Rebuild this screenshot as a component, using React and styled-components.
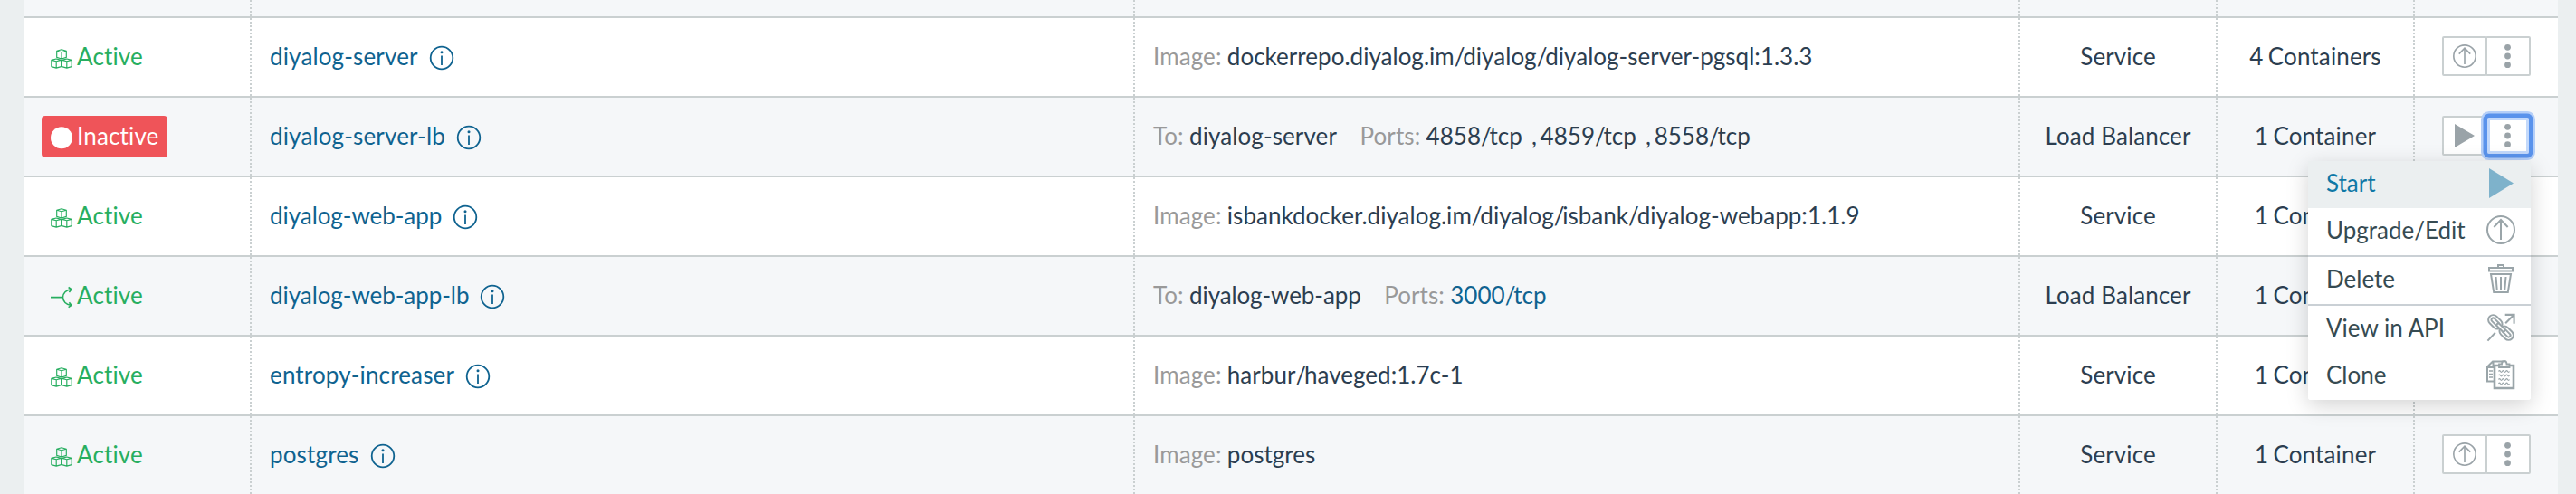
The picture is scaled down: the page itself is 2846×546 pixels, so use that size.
import React from 'react';
import styled, { createGlobalStyle, css } from 'styled-components';

const GlobalStyle = createGlobalStyle`
  * { box-sizing: border-box; }
  body {
    margin: 0;
    background: #ebeff0;
    color: #2c3e50;
    font-family: Lato, "Liberation Sans", sans-serif;
    font-size: 26px;
    line-height: 40px;
    font-variant-ligatures: none;
    letter-spacing: 0.02px;
    overflow: hidden;
  }
`;

const Page = styled.main`
  height: 546px;
  padding: 0 20px 0 26px;
  overflow: hidden;
`;

const Row = styled.div`
  display: grid;
  grid-template-columns: 250px 976px 978px 218px 218px 160px;
  height: ${(p) => (p.$partial ? 18 : 88)}px;
  background: ${(p) => (p.$shaded ? '#f5f7f9' : '#fff')};
  border-top: ${(p) => (p.$partial ? 0 : 2)}px solid #cad0d1;
`;

const Cell = styled.div`
  display: flex;
  align-items: center;
  justify-content: ${(p) => (p.$center ? 'center' : 'flex-start')};
  padding: 0 20px 2px;
  border-left: ${(p) => (p.$first ? 0 : 2)}px dotted #cad0d1;
  white-space: nowrap;
`;

const StatusCell = styled(Cell)`
  padding-bottom: 0;
  letter-spacing: 0.15px;
`;

const KindCell = styled(Cell)`
  letter-spacing: 0.1px;
`;

const CountCell = styled(Cell)`
  letter-spacing: 0.15px;
  word-spacing: -1.5px;
`;

const ActionCell = styled(Cell)`
  padding: 0 30px 2px;
`;

const Status = styled.div`
  display: flex;
  align-items: center;
  gap: 5px;
  height: 46px;
  padding: 0 10px 2px;
  border-radius: 4px;
  color: ${(p) => (p.$inactive ? '#fff' : '#27ae60')};
  background: ${(p) => (p.$inactive ? '#ef5459' : 'transparent')};
`;

const NameLink = styled.a`
  color: #0f6390;
  letter-spacing: ${(p) => (p.$tight ? -0.06 : 0.15)}px;
`;

const InfoBadge = styled.span`
  display: flex;
  margin: 4px 0 0 12px;
  color: #0f6390;
`;

const Label = styled.span`
  color: #999;
  margin-right: 6.3px;
  letter-spacing: 0.1px;
`;

const Target = styled.span`
  margin-right: 25.5px;
  letter-spacing: ${(p) => (p.$tight ? -0.1 : 0.1)}px;
`;

const Port = styled.span`
  color: ${(p) => (p.$link ? '#0f6390' : 'inherit')};
`;

const Slash = styled.span`
  letter-spacing: -2.2px;
`;

const Comma = styled.span`
  margin: 0 3.8px 0 10px;
`;

const ButtonGroup = styled.div`
  position: relative;
  display: flex;
  width: 98px;
  height: 44px;
`;

const IconButton = styled.button`
  display: flex;
  align-items: center;
  justify-content: center;
  width: 50px;
  height: 44px;
  padding: 0;
  border: 2px solid #cad0d1;
  border-radius: 2px;
  background: #fff;
  color: #9aa3a8;
  & + & { margin-left: -2px; }
  ${(p) => p.$focused && css`
    z-index: 1;
    border-color: #5a93ec;
    border-radius: 4px;
    box-shadow: 0 0 0 2.5px #5a93ec, 0 0 0 5px #b5cff8, inset 0 0 0 3px #c3d9fb;
  `}
`;

const Menu = styled.div`
  position: absolute;
  z-index: 2;
  top: 50px;
  right: 0;
  width: 246px;
  border-radius: 0 0 3px 3px;
  background: #fff;
  letter-spacing: 0;
  box-shadow: 0 6px 24px rgba(0, 0, 0, 0.175);
`;

const MenuItem = styled.div`
  display: flex;
  align-items: center;
  justify-content: space-between;
  height: ${(p) => (p.$divided ? 54 : 52)}px;
  padding: 0 17px 4px 20px;
  border-top: ${(p) => (p.$divided ? 2 : 0)}px solid #cad0d5;
  background: ${(p) => (p.$active ? '#ebeff0' : '#fff')};
  color: ${(p) => (p.$active ? '#0f78a6' : '#364b52')};
  &:last-child { border-radius: 0 0 3px 3px; }
`;

const MenuIcon = styled.span`
  display: flex;
  justify-content: center;
  width: 32px;
  color: ${(p) => (p.$active ? '#7eb2cb' : '#9aa5a9')};
`;

const CubesIcon = () => (
  <svg width="24" height="30" viewBox="0 -6 24 30" fill="none" stroke="currentColor" strokeWidth="1.15" strokeLinejoin="round">
    <path d="M6.7 3.200 12 1.800l5.300 1.400v7.200L12 12l-5.300-1.600zM6.700 3.200 12 4.700l5.300-1.500M12 4.700V12" />
    <path d="M.8 13.400 6.200 12l5.400 1.400v7.200l-5.400 1.500-5.400-1.500zM.8 13.400l5.400 1.400 5.400-1.400M6.200 14.800v7.300" />
    <path d="m12.400 13.400 5.400-1.400 5.400 1.400v7.200l-5.400 1.500-5.400-1.500zM12.400 13.400l5.400 1.400 5.400-1.400M17.800 14.800v7.300" />
  </svg>
);

const BalancerIcon = () => (
  <svg width="24" height="30" viewBox="0 0 24 30" fill="none" stroke="currentColor" strokeWidth="1.600">
    <path d="M0 17.600h13.500M22.500 8.800c-5.500.6-9 4.200-9 8.800s3.500 8.200 9 8.800" />
    <path d="m19.600 6.500 3.300 2.300-2.500 3.200M20.400 23.200l2.500 3.200-3.300 2.300" />
  </svg>
);

const DotIcon = () => (
  <svg width="24" height="30" viewBox="0 0 24 30"><circle cx="12" cy="17.300" r="12" fill="currentColor" /></svg>
);

const InfoIcon = () => (
  <svg width="28" height="28" viewBox="0 0 28 28" fill="none" stroke="currentColor">
    <circle cx="14" cy="14" r="12.300" strokeWidth="1.800" />
    <path d="M14 11.500v10.500" strokeWidth="1.800" />
    <circle cx="14" cy="7.800" r="1.500" fill="currentColor" stroke="none" />
  </svg>
);

const UpIcon = ({ size }) => (
  <svg width={size} height={size} viewBox="0 0 32 32" fill="none" stroke="currentColor" strokeWidth="2">
    <circle cx="16" cy="16" r="15" />
    <path d="M16 5v22M8.300 13 16 5l7.700 8" />
  </svg>
);

const PlayIcon = ({ width, height }) => (
  <svg width={width} height={height} viewBox="0 0 27 33" preserveAspectRatio="none">
    <path d="M0 0v33l27-16.500z" fill="currentColor" />
  </svg>
);

const MoreIcon = () => (
  <svg width="8" height="28" viewBox="0 0 8 28" fill="currentColor">
    <circle cx="3.500" cy="4.300" r="3.400" /><circle cx="3.500" cy="14" r="3.400" /><circle cx="3.500" cy="23.700" r="3.400" />
  </svg>
);

const TrashIcon = () => (
  <svg width="32" height="34" viewBox="0 0 32 34" fill="none" stroke="currentColor" strokeWidth="2">
    <path d="M3 5h26v3.500H3zM13 5V2h6v3" />
    <path d="M5 12h22l-3.200 20H8.200zM10.500 15l1.200 14M16 15v14M21.500 15l-1.200 14" />
  </svg>
);

const LinkIcon = () => (
  <svg width="34" height="34" viewBox="0 0 34 34" fill="none" stroke="currentColor">
    <g transform="rotate(45 17 17)" strokeWidth="2.100">
      <rect x="-1.500" y="11.300" width="18.500" height="11.400" rx="5.700" />
      <rect x="2.100" y="14.900" width="11.300" height="4.200" rx="2.100" />
      <rect x="17" y="11.300" width="18.500" height="11.400" rx="5.700" />
      <rect x="20.600" y="14.900" width="11.300" height="4.200" rx="2.100" />
      <rect x="11" y="15.100" width="12" height="3.800" rx="1.800" fill="#fff" />
    </g>
    <path d="m1.500 32.500 9-9.500M22.500 12 32 2.500M22 2h10.500v10.500" strokeWidth="2.200" />
  </svg>
);

const CloneIcon = () => (
  <svg width="32" height="34" viewBox="0 0 32 34" fill="none" stroke="currentColor">
    <path d="M8.500 24.500H1V8.500l6-6h11M1 9h6.500V2.500" strokeWidth="2" />
    <path d="M3 13h4M3 16.500h4M3 20h4" strokeWidth="1.400" />
    <path d="M9 7h21v25H9z" strokeWidth="2.600" />
    <path d="M14 9V5.500h3c0-4.700 5.500-4.700 5.500 0h3V9z" strokeWidth="1.800" fill="#fff" />
    <path d="M13.500 13.500q1-1.600 2 0t2 0 2 0 2 0 2 0 2 0M13.500 18q1-1.600 2 0t2 0 2 0 2 0 2 0 2 0M13.500 22.500q1-1.600 2 0t2 0 2 0 2 0 2 0 2 0M13.500 27q1-1.600 2 0t2 0 2 0 2 0 2 0 2 0" strokeWidth="1.200" />
  </svg>
);

const services = [
  { name: 'diyalog-server', image: 'dockerrepo.diyalog.im/diyalog/diyalog-server-pgsql:1.3.3', count: '4 Containers' },
  { name: 'diyalog-server-lb', to: 'diyalog-server', ports: ['4858/tcp', '4859/tcp', '8558/tcp'], count: '1 Container', inactive: true },
  { name: 'diyalog-web-app', image: 'isbankdocker.diyalog.im/diyalog/isbank/diyalog-webapp:1.1.9', count: '1 Container', tight: true },
  { name: 'diyalog-web-app-lb', to: 'diyalog-web-app', ports: ['3000/tcp'], linked: true, count: '1 Container', tight: true },
  { name: 'entropy-increaser', image: 'harbur/haveged:1.7c-1', count: '1 Container' },
  { name: 'postgres', image: 'postgres', count: '1 Container' },
];

const menuItems = [
  { label: 'Start', icon: <PlayIcon width={27} height={33} />, active: true },
  { label: 'Upgrade/Edit', icon: <UpIcon size={32} /> },
  { label: 'Delete', icon: <TrashIcon />, divided: true },
  { label: 'View in API', icon: <LinkIcon />, divided: true },
  { label: 'Clone', icon: <CloneIcon /> },
];

function ActionMenu() {
  return (
    <Menu role="menu">
      {menuItems.map((m) => (
        <MenuItem key={m.label} role="menuitem" $active={m.active} $divided={m.divided}>
          {m.label}
          <MenuIcon $active={m.active}>{m.icon}</MenuIcon>
        </MenuItem>
      ))}
    </Menu>
  );
}

function ServiceStatus({ service }) {
  if (service.inactive) return <Status $inactive><DotIcon />Inactive</Status>;
  return <Status>{service.to ? <BalancerIcon /> : <CubesIcon />}Active</Status>;
}

// Tightens the gap that follows each slash of an image path or a port.
function Path({ text }) {
  return (
    <span>
      {text.split('/').map((part, i) => (
        <React.Fragment key={i}>{i > 0 && <Slash>/</Slash>}{part}</React.Fragment>
      ))}
    </span>
  );
}

function Details({ service }) {
  if (service.image) return <><Label>Image:</Label><Path text={service.image} /></>;
  return (
    <>
      <Label>To:</Label><Target $tight={service.tight}>{service.to}</Target>
      <Label>Ports:</Label>
      {service.ports.map((port, i) => (
        <React.Fragment key={port}>
          {i > 0 && <Comma>,</Comma>}
          <Port $link={service.linked}><Path text={port} /></Port>
        </React.Fragment>
      ))}
    </>
  );
}

export default function App() {
  return (
    <>
      <GlobalStyle />
      <Page>
        <Row $partial $shaded>
          {[0, 1, 2, 3, 4, 5].map((i) => <Cell key={i} $first={i === 0} />)}
        </Row>
        {services.map((s, i) => (
          <Row key={s.name} $shaded={i % 2 === 1}>
            <StatusCell $first><ServiceStatus service={s} /></StatusCell>
            <Cell><NameLink $tight={s.tight}>{s.name}</NameLink><InfoBadge><InfoIcon /></InfoBadge></Cell>
            <Cell><Details service={s} /></Cell>
            <KindCell $center>{s.to ? 'Load Balancer' : 'Service'}</KindCell>
            <CountCell $center>{s.count}</CountCell>
            <ActionCell>
              <ButtonGroup>
                <IconButton aria-label="Action">
                  {s.inactive ? <PlayIcon width={22} height={26} /> : <UpIcon size={26} />}
                </IconButton>
                <IconButton aria-label="More" $focused={s.inactive}><MoreIcon /></IconButton>
                {s.inactive && <ActionMenu />}
              </ButtonGroup>
            </ActionCell>
          </Row>
        ))}
      </Page>
    </>
  );
}
